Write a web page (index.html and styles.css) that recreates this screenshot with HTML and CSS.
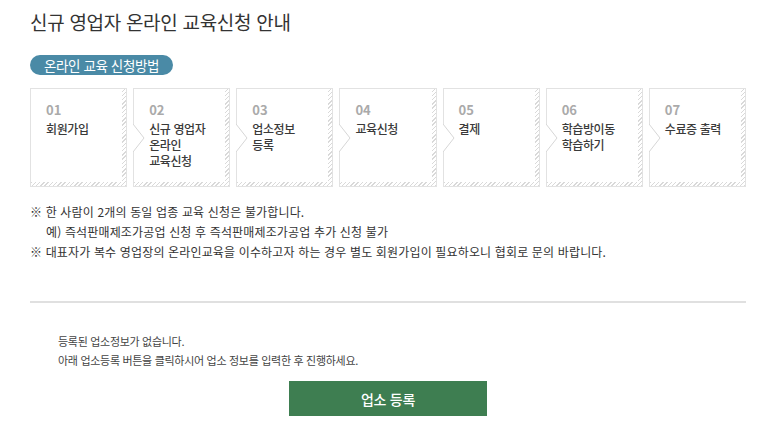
FILE: index.html
```html
<!DOCTYPE html>
<html lang="ko">
<head>
  <meta charset="UTF-8">
  <title>신규 영업자 온라인 교육신청 안내</title>
  <link rel="stylesheet" href="styles.css">
</head>
<body>
  <div class="wrap">
    <h2 class="title">신규 영업자 온라인 교육신청 안내</h2>

    <span class="pill">온라인 교육 신청방법</span>

    <ol class="steps">
      <li class="step">
        <span class="num">01</span>
        <span class="label">회원가입</span>
      </li>
      <li class="step">
        <svg class="chev" viewBox="0 0 12 28"><polyline points="0,0 11,14 0,28"/></svg>
        <span class="num">02</span>
        <span class="label">신규 영업자<br>온라인<br>교육신청</span>
      </li>
      <li class="step">
        <svg class="chev" viewBox="0 0 12 28"><polyline points="0,0 11,14 0,28"/></svg>
        <span class="num">03</span>
        <span class="label">업소정보<br>등록</span>
      </li>
      <li class="step">
        <svg class="chev" viewBox="0 0 12 28"><polyline points="0,0 11,14 0,28"/></svg>
        <span class="num">04</span>
        <span class="label">교육신청</span>
      </li>
      <li class="step">
        <svg class="chev" viewBox="0 0 12 28"><polyline points="0,0 11,14 0,28"/></svg>
        <span class="num">05</span>
        <span class="label">결제</span>
      </li>
      <li class="step">
        <svg class="chev" viewBox="0 0 12 28"><polyline points="0,0 11,14 0,28"/></svg>
        <span class="num">06</span>
        <span class="label">학습방이동<br>학습하기</span>
      </li>
      <li class="step">
        <svg class="chev" viewBox="0 0 12 28"><polyline points="0,0 11,14 0,28"/></svg>
        <span class="num">07</span>
        <span class="label">수료증 출력</span>
      </li>
    </ol>

    <ul class="notes">
      <li>※ 한 사람이 2개의 동일 업종 교육 신청은 불가합니다.</li>
      <li class="sub">예) 즉석판매제조가공업 신청 후 즉석판매제조가공업 추가 신청 불가</li>
      <li>※ 대표자가 복수 영업장의 온라인교육을 이수하고자 하는 경우 별도 회원가입이 필요하오니 협회로 문의 바랍니다.</li>
    </ul>

    <hr class="line">

    <div class="empty">
      <p>등록된 업소정보가 없습니다.</p>
      <p>아래 업소등록 버튼을 클릭하시어 업소 정보를 입력한 후 진행하세요.</p>
    </div>

    <div class="actions">
      <button class="btn-reg">업소 등록</button>
    </div>
  </div>
</body>
</html>
```

FILE: styles.css
```css
body {
  margin: 0;
  font-family: "Noto Sans CJK KR", "Noto Sans", sans-serif;
  color: #333;
  background: #fff;
}
.wrap {
  width: 716px;
  padding: 0 0 0 30px;
}
.title {
  margin: 0;
  padding-top: 9px;
  font-size: 19px;
  font-weight: 400;
  line-height: 26px;
  color: #333;
  letter-spacing: -0.3px;
}
.pill {
  display: inline-block;
  margin-top: 20px;
  padding: 0 14px;
  height: 20px;
  line-height: 20px;
  font-size: 13.5px;
  color: #fff;
  background: #4a8aa6;
  border-radius: 10px;
  letter-spacing: -0.4px;
}
.steps {
  list-style: none;
  margin: 12px 0 0;
  padding: 0;
  display: flex;
  gap: 6px;
}
.step {
  position: relative;
  flex: 1;
  height: 99px;
  box-sizing: border-box;
  border: 1px solid #e2e2e2;
  padding: 13px 0 0 15px;
  display: flex;
  flex-direction: column;
  background:
    repeating-linear-gradient(-45deg, #d9d9d9 0 1px, #fff 1px 3px) right top / 4px 100% no-repeat,
    repeating-linear-gradient(-45deg, #d9d9d9 0 1px, #fff 1px 3px) left bottom / 100% 4px no-repeat,
    #fff;
}
.chev {
  position: absolute;
  left: -1px;
  top: 35px;
  width: 12px;
  height: 28px;
  fill: #fff;
  stroke: #d6d6d6;
  stroke-width: 1;
}
.num {
  font-size: 13px;
  font-weight: 700;
  color: #aaa;
  line-height: 16px;
}
.label {
  margin-top: 3px;
  font-size: 12px;
  font-weight: 500;
  line-height: 16px;
  color: #3a3a3a;
  letter-spacing: -0.4px;
}
.notes {
  list-style: none;
  margin: 15px 0 0;
  padding: 0;
  font-size: 12px;
  line-height: 20px;
  color: #333;
  letter-spacing: 0.15px;
}
.notes .sub {
  padding-left: 16px;
}
.line {
  margin: 39px 0 0;
  border: 0;
  height: 2px;
  background: #e0e0e0;
}
.empty {
  margin-top: 29px;
  padding-left: 28px;
  font-size: 11px;
  line-height: 19px;
  color: #444;
  letter-spacing: -0.3px;
}
.empty p {
  margin: 0;
}
.actions {
  display: flex;
  justify-content: center;
  margin-top: 11px;
}
.btn-reg {
  width: 198px;
  height: 35px;
  border: 0;
  background: #3e7e51;
  color: #fff;
  font-family: inherit;
  font-size: 14px;
  font-weight: 500;
  letter-spacing: -0.3px;
  cursor: pointer;
}
```
